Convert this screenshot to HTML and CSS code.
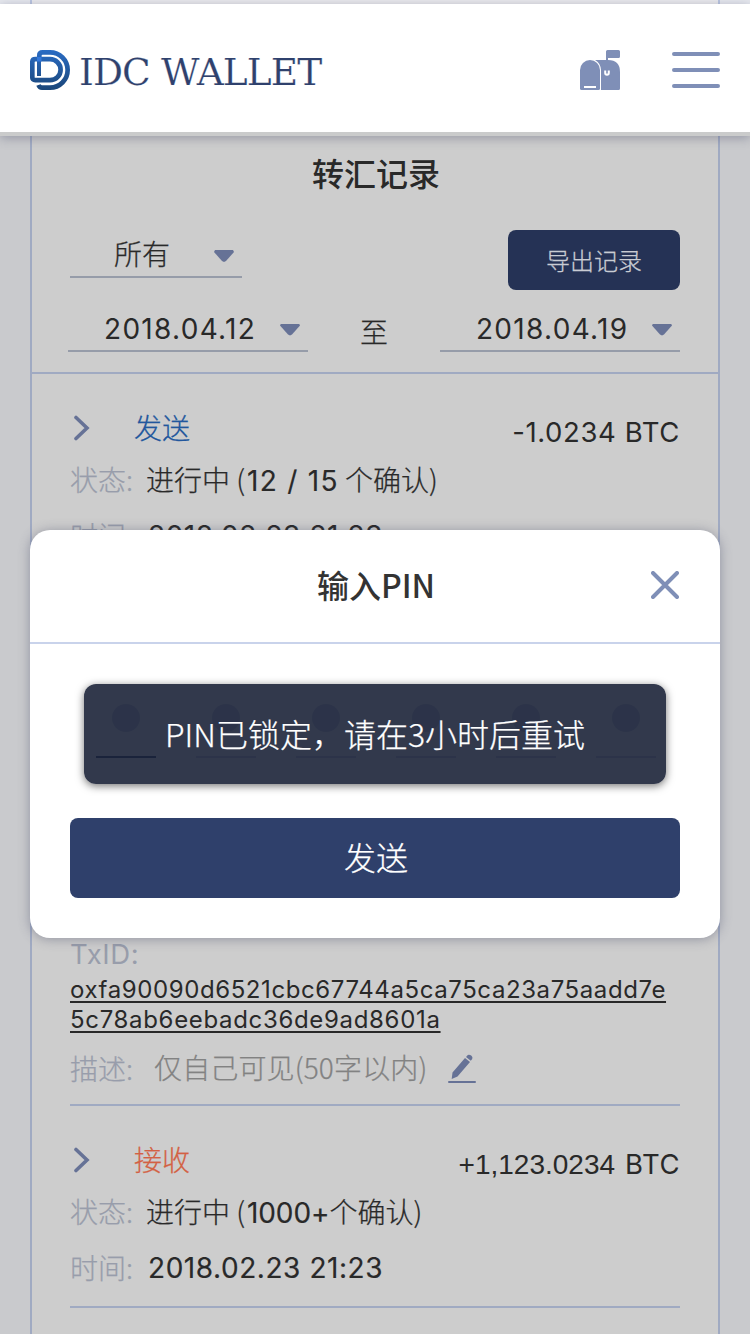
FILE: index.html
```html
<!DOCTYPE html>
<html lang="zh-CN">
<head>
<meta charset="utf-8">
<title>IDC Wallet</title>
<link rel="stylesheet" href="styles.css">
</head>
<body>
<div class="screen">
  <div class="top-strip"><div class="top-strip-card"></div></div>
  <header class="header">
    <div class="brand">
      <svg width="40" height="40" viewBox="0 0 40 40">
        <defs>
          <linearGradient id="lg" gradientUnits="userSpaceOnUse" x1="0" y1="0" x2="0" y2="40">
            <stop offset="0" stop-color="#2a6cc4"/><stop offset="1" stop-color="#1a4679"/>
          </linearGradient>
        </defs>
        <g fill="none" stroke="url(#lg)" stroke-width="4.700">
          <path stroke-width="4" d="M9 26V9"/>
          <path d="M9.300 9V5.500Q9.300 2.350 12.500 2.350H20A17.650 17.650 0 0 1 20 37.650H12Q9.500 37.650 8.500 35"/>
          <path d="M5.300 9.200H20A10.600 10.500 0 0 1 20 30.200H5.300Q2.300 30.200 2.300 27.200V12.200Q2.300 9.200 5.300 9.200Z"/>
        </g>
        <rect x="7" y="7" width="4.500" height="4.500" fill="#3278dc"/>
      </svg>
      <span class="brand-text">IDC WALLET</span>
    </div>
    <div class="header-actions">
      <svg width="40" height="40" viewBox="0 0 40 40">
        <path fill="#7f8fb7" d="M26 10V1.500Q26 0 27.500 0H38.500Q40 0 40 1.500V6.500Q40 8 38.500 8H28V10Q40 10 40 22V38.500Q40 40 38.500 40H21V20Q20.500 13 15 10Z"/>
        <path fill="#7f8fb7" d="M0 38.500V20A10 10 0 0 1 20 20V38.500Q20 40 18.500 40H1.500Q0 40 0 38.500Z"/>
        <path d="M4 37H16" stroke="#fff" stroke-width="2"/>
        <path d="M25.200 20.500V23A1.800 1.800 0 0 0 28.800 23V20.500" fill="none" stroke="#fff" stroke-width="2"/>
      </svg>
      <svg width="48" height="36" viewBox="0 0 48 36">
        <path d="M2 2H46M2 18H46M2 34H46" stroke="#7f8fb7" stroke-width="4" stroke-linecap="round"/>
      </svg>
    </div>
  </header>

  <main class="card">
    <section class="filters">
      <h1 class="title">转汇记录</h1>
      <div class="filter-row">
        <div class="select select-type"><span>所有</span><i class="caret"></i></div>
        <div class="export">导出记录</div>
      </div>
      <div class="date-row">
        <div class="select select-date"><span class="num">2018.04.12</span><i class="caret"></i></div>
        <span class="to">至</span>
        <div class="select select-date"><span class="num">2018.04.19</span><i class="caret"></i></div>
      </div>
    </section>

    <article class="record">
      <div class="head">
        <svg class="chevron" width="16" height="26" viewBox="0 0 16 26"><path d="M2 2.500L13 13L2 23.500" fill="none" stroke="#667296" stroke-width="3.600" stroke-linecap="round"/></svg>
        <span class="kind send">发送</span>
        <span class="amount num amount-send">-1.0234 BTC</span>
      </div>
      <div class="row"><span class="label">状态:</span><span class="value">进行中 (<b class="num">12 / 15</b> 个确认)</span></div>
      <div class="row time"><span class="label">时间:</span><span class="value num stamp">2018.02.23 21:23</span></div>
      <div class="row tx"><span class="label num">TxID:</span></div>
      <div class="hash"><span>oxfa90090d6521cbc67744a5ca75ca23a75aadd7e</span><span>5c78ab6eebadc36de9ad8601a</span></div>
      <div class="row desc"><span class="label">描述:</span><span class="hint">仅自己可见(50字以内)</span>
        <svg class="pencil" width="28" height="30" viewBox="0 0 28 30">
          <path d="M1 28H27" stroke="#667296" stroke-width="2" stroke-linecap="round"/>
          <path fill="#667296" d="M3.700 25L4.500 18.500L17 4L22 8L9.500 22.500ZM18 3L19.800 1Q21.500 0.200 23.500 1.800Q25 3.300 24.200 5L22.800 6.800Z"/>
        </svg>
      </div>
    </article>

    <article class="record second">
      <div class="head">
        <svg class="chevron" width="16" height="26" viewBox="0 0 16 26"><path d="M2 2.500L13 13L2 23.500" fill="none" stroke="#667296" stroke-width="3.600" stroke-linecap="round"/></svg>
        <span class="kind receive">接收</span>
        <span class="amount amount-receive"><span class="arial">+1,123.0234</span><span class="num btc">BTC</span></span>
      </div>
      <div class="row"><span class="label">状态:</span><span class="value">进行中 (<b class="num thousand">1000+</b>个确认)</span></div>
      <div class="row time"><span class="label">时间:</span><span class="value num stamp">2018.02.23 21:23</span></div>
    </article>
  </main>

  <div class="modal">
    <div class="modal-head">
      <h2>输入PIN</h2>
      <svg class="close" width="28" height="28" viewBox="0 0 28 28"><path d="M2 2L26 26M26 2L2 26" stroke="#7f8fb7" stroke-width="4" stroke-linecap="round"/></svg>
    </div>
    <div class="modal-body">
      <div class="pins">
        <div class="pin active"></div><div class="pin"></div><div class="pin"></div>
        <div class="pin"></div><div class="pin"></div><div class="pin"></div>
      </div>
      <div class="submit">发送</div>
    </div>
    <div class="toast">PIN已锁定，请在3小时后重试</div>
  </div>
</div>
</body>
</html>
```

FILE: styles.css
```css
* { box-sizing: border-box; }
body { margin: 0; }
.screen {
  position: relative;
  width: 750px;
  height: 1334px;
  overflow: hidden;
  background: #c9cacd;
  color: #292929;
  font: 300 28px "Noto Sans CJK SC", sans-serif;
  -webkit-text-stroke: .25px currentColor;
  display: flex;
  flex-direction: column;
}
.num { font-family: Inter, "Noto Sans CJK SC", sans-serif; font-weight: 400; -webkit-text-stroke: 0; }
.top-strip { height: 4px; flex: none; padding: 0 30px; background: #e7e9ef; }
.top-strip-card { height: 4px; border: solid #bac6e1; border-width: 0 2px; background: #ebebee; }
.header {
  position: relative;
  flex: none;
  height: 132px;
  padding: 4px 30px 0;
  background: #fff;
  border-bottom: 4px solid #cacbcb;
  box-shadow: 0 2px 10px rgba(70, 75, 105, .4);
  display: flex;
  align-items: center;
  justify-content: space-between;
}
.brand { display: flex; align-items: center; gap: 9px; }
.brand-text {
  padding-top: 3px;
  font: 400 37.500px/52px "DejaVu Serif", serif;
  letter-spacing: -.9px;
  color: #2f416d;
  -webkit-text-stroke: .2px #fff;
  white-space: nowrap;
}
.header-actions { display: flex; align-items: center; gap: 52px; }

.card {
  flex: none;
  height: 1198px;
  margin: 0 30px;
  border: solid #a0aac2;
  border-width: 0 2px;
  background: #cdcdcd;
}
.filters { height: 238px; padding: 0 38px; border-bottom: 2px solid #a0aac2; }
.title { margin: 0; height: 76px; padding-left: 2px; line-height: 72px; text-align: center; font-size: 32px; font-weight: 500; -webkit-text-stroke: 0; }
.filter-row { height: 78px; padding-top: 18px; display: flex; justify-content: space-between; }
.select {
  display: flex;
  align-items: center;
  justify-content: space-between;
  height: 48px;
  border-bottom: 2px solid #969ca9;
  line-height: 42px;
}
.select-type { width: 172px; padding: 0 8px 0 44px; }
.caret { width: 20px; height: 12px; background: #667296; clip-path: polygon(1px 0, 19px 0, 20px 2px, 12px 11px, 10px 12px, 8px 11px, 0 2px); }
.select-type .caret { margin-top: 6px; }
.export {
  width: 172px; height: 60px; line-height: 59px;
  border-radius: 8px;
  background: #253255;
  color: #c9ccd3;
  font-size: 24px;
  text-align: center;
}
.date-row { margin: 10px 0 0 -2px; height: 52px; display: flex; align-items: flex-end; justify-content: space-between; }
.select-date { width: 240px; padding: 4px 8px 0 36px; font-size: 28px; }
.select-date .num { letter-spacing: 1.300px; }
.select-date .caret { margin-top: 1px; }
.to { line-height: 42px; }

.record { margin: 0 38px; height: 732px; border-bottom: 2px solid #a0aac2; padding-top: 28px; }
.second { height: 202px; }
.head { height: 52px; display: flex; align-items: center; }
.chevron { margin-left: 4px; }
.kind { margin-left: 44px; padding-bottom: 2px; }
.send { color: #22579d; }
.receive { color: #d36143; }
.amount { margin-left: auto; padding-top: 8px; white-space: nowrap; }
.amount-send { font-size: 27.500px; letter-spacing: .6px; }
.amount-receive { padding-top: 4px; }
.arial { font-family: "Liberation Sans", Arial, sans-serif; font-weight: 400; -webkit-text-stroke: 0; margin-right: 10px; }
.btc { font-size: 27.500px; letter-spacing: .5px; }
.row { height: 52px; padding-bottom: 2px; display: flex; align-items: center; white-space: nowrap; }
.label { width: 76px; color: #989dab; }
.value b { padding-left: 2px; font-size: 28px; -webkit-text-stroke: .15px currentColor; letter-spacing: 1.300px; }
.value .thousand { letter-spacing: -.1px; }
.time { height: 60px; }
.value.stamp { font-size: 28px; letter-spacing: .56px; padding: 2px 0 0 2px; -webkit-text-stroke: .15px currentColor; }
.tx { margin-top: 369px; height: 40px; }
.tx .label { font-size: 27.500px; letter-spacing: .6px; }
.hash { height: 60px; display: flex; flex-direction: column; align-items: flex-start; font: 400 24px/30px Inter, sans-serif; -webkit-text-stroke: 0; }
.hash span { height: 30px; letter-spacing: .59px; text-decoration: underline; text-decoration-thickness: 2px; text-underline-offset: 3px; text-decoration-skip-ink: none; white-space: nowrap; }
.hash span + span { letter-spacing: .67px; }
.desc { margin-top: 7px; height: 52px; }
.hint { margin-left: 8px; color: #828282; letter-spacing: .15px; padding-bottom: 1px; }
.desc .label { padding-top: 2px; }
.pencil { margin: 3px 0 0 21px; }

.modal {
  position: absolute;
  left: 30px; top: 530px;
  width: 690px; height: 408px;
  border-radius: 20px;
  background: #fff;
  box-shadow: 0 1px 12px rgba(70, 75, 105, .45);
}
.modal-head { position: relative; height: 114px; border-bottom: 2px solid #c9d3eb; }
.modal-head h2 { margin: 0; padding-left: 2px; line-height: 109px; text-align: center; font-size: 32px; font-weight: 500; color: #333; -webkit-text-stroke: 0; }
.close { position: absolute; right: 41px; top: 41px; }
.modal-body { padding: 60px 40px 40px; }
.pins { height: 114px; padding-left: 26px; display: flex; gap: 40px; }
.pin { flex: none; width: 60px; height: 54px; border-bottom: 2px solid #bcc4d9; display: flex; justify-content: center; }
.pin::before { content: ""; width: 28px; height: 28px; border-radius: 50%; background: #bcc4d9; }
.pin.active { border-color: #0c2650; }
.submit { height: 80px; padding-left: 2px; line-height: 77px; border-radius: 8px; background: #2f406b; color: #fff; font-size: 32px; text-align: center; }
.toast {
  position: absolute;
  left: 54px; top: 154px;
  width: 582px; height: 100px;
  line-height: 98px;
  border-radius: 12px;
  background: rgba(28, 36, 57, .9);
  box-shadow: 0 2px 8px rgba(0, 0, 0, .55);
  color: #fff;
  font-size: 32px;
  text-align: center;
}
```
